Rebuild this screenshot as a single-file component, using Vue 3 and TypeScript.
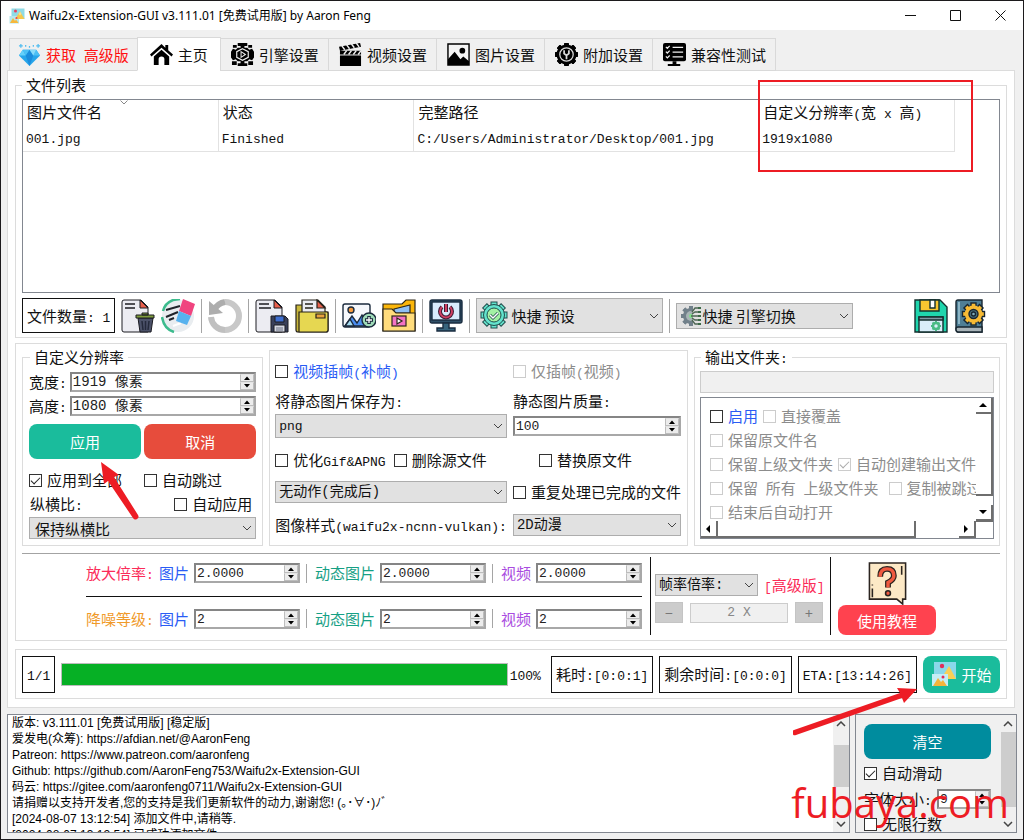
<script setup lang="ts">
import { h, type FunctionalComponent } from 'vue'

/* Text whose Latin runs are set in the narrower monospace face. */
const Mix: FunctionalComponent<{ s: string }> = (p) =>
  h(
    'span',
    { class: 'mix' },
    (p.s.match(/[\x20-\x7e]+|[^\x20-\x7e]+/g) ?? []).map((run) =>
      /^[\x20-\x7e]/.test(run) ? h('span', { class: 'lat' }, run) : run,
    ),
  )
Mix.props = ['s']

const Check: FunctionalComponent<{ s: string; on?: boolean; off?: boolean }> = (p) =>
  h('label', { class: ['check', { off: p.off }] }, [
    h('input', { type: 'checkbox', checked: !!p.on, disabled: !!p.off }),
    h(Mix, { s: p.s }),
  ])
Check.props = { s: String, on: Boolean, off: Boolean }

const Spin: FunctionalComponent<{ id: string; v: string; name?: string }> = (p) =>
  h('span', { class: 'spin' }, [
    h('input', { id: p.id, type: 'text', value: p.v, 'aria-label': p.name }),
    h('span', { class: 'steps' }, [
      h('button', { type: 'button', 'aria-label': '增加' }, [
        h('svg', { viewBox: '0 0 6 4' }, [h('path', { d: 'M0 4 3 0.5 6 4z' })]),
      ]),
      h('button', { type: 'button', 'aria-label': '减少' }, [
        h('svg', { viewBox: '0 0 6 4' }, [h('path', { d: 'M0 0 3 3.5 6 0z' })]),
      ]),
    ]),
  ])
Spin.props = ['id', 'v', 'name']

const Combo: FunctionalComponent<{ id: string; v: string; name: string }> = (p, { slots }) =>
  h('span', { class: 'combo' }, [
    slots.default?.(),
    h('select', { id: p.id, 'aria-label': p.name }, [h('option', p.v)]),
    h('svg', { class: 'chev', viewBox: '0 0 10 6' }, [h('path', { d: 'M1 1l4 4 4-4' })]),
  ])
Combo.props = ['id', 'v', 'name']

const scaleRows = [
  { id: 'scale', label: '放大倍率:', tone: 'red', v: '2.0000' },
  { id: 'noise', label: '降噪等级:', tone: 'orange', v: '2' },
]
const kinds = [
  { id: 'img', label: '图片', tone: 'blue' },
  { id: 'gif', label: '动态图片', tone: 'green' },
  { id: 'vid', label: '视频', tone: 'violet' },
]
const log = [
  '版本: v3.111.01 [免费试用版] [稳定版]',
  '爱发电(众筹): https://afdian.net/@AaronFeng',
  'Patreon: https://www.patreon.com/aaronfeng',
  'Github: https://github.com/AaronFeng753/Waifu2x-Extension-GUI',
  '码云: https://gitee.com/aaronfeng0711/Waifu2x-Extension-GUI',
  '请捐赠以支持开发者,您的支持是我们更新软件的动力,谢谢您! (｡･∀･)ﾉﾞ',
  '[2024-08-07 13:12:54] 添加文件中,请稍等.',
  '[2024-08-07 13:12:54] 已成功添加文件.',
]
const teeth8 = [0, 45, 90, 135, 180, 225, 270, 315]
</script>

<template>
  <div class="window">
    <header class="title">
      <svg class="app-icon" viewBox="0 0 32 32">
        <rect x="5" y="1" width="26" height="21" fill="#8fdbe6" />
        <rect x="1" y="16" width="19" height="15" fill="#b5e7ee" />
        <path d="M12 22 22 7l9 15z" fill="#f6c84c" /><path d="M19 12l3-5 3 5-3 3z" fill="#fbe08c" />
        <path d="M2 30l6-10 4 6 2-3 5 7z" fill="#f6b73c" />
        <circle cx="13" cy="6" r="3" fill="#e8415f" /><circle cx="15" cy="20" r="2" fill="#e8415f" />
      </svg>
      <h1>Waifu2x-Extension-GUI v3.111.01 [免费试用版] by Aaron Feng</h1>
      <div class="win-btns">
        <button type="button" aria-label="最小化"><svg viewBox="0 0 11 11"><path d="M0 5.500h11" /></svg></button>
        <button type="button" aria-label="最大化"><svg viewBox="0 0 11 11"><path d="M.5.5h10v10H.5z" /></svg></button>
        <button type="button" aria-label="关闭"><svg viewBox="0 0 11 11"><path d="M.5.5l10 10M10.500.5l-10 10" /></svg></button>
      </div>
    </header>

    <nav class="tabs">
      <button type="button" class="tab premium">
        <svg viewBox="0 0 24 24">
          <path d="M5 7h14l4 6-11 11L1 13z" fill="#27a5ea" /><path d="M5 7l3 6-7 0z" fill="#65d0fa" />
          <path d="M8 13l4-6 4 6-4 11z" fill="#1b8cdc" /><path d="M5 7h7l-4 6zM19 7l-3 6h7z" fill="#4cc0f5" />
          <path d="M12 7h7l-3 6z" fill="#88dcfb" />
          <path d="M3 1v4M1 3h4M21 1v4M19 3h4M8 2v2M12 3v2M16 2v2" stroke="#52bdf0" stroke-width="1.300" />
        </svg>
        <Mix s="获取 高级版" />
      </button>
      <button type="button" class="tab active">
        <svg viewBox="0 0 24 24"><path d="M12 1 0 12l1.500 2L12 5l10.500 9 1.500-2-5-4.500V2h-3v3z" /><path d="M4 14l8-7 8 7v9h-5v-6a3 3 0 0 0-6 0v6H4z" /></svg>
        <Mix s="主页" />
      </button>
      <button type="button" class="tab">
        <svg viewBox="0 0 24 24">
          <path d="M7 0h10v3h-3v2h3l2 2 3-1 2 3v6l-2 3-3-1-2 2h-3v2h3v3H7v-3h3v-2H7l-2-2-3 1-2-3V9l2-3 3 1 2-2h3V3H7z" />
          <path d="M1 19h5v4H1zM18 19h5v4h-5zM2 2h4v3H2zM18 2h4v3h-4z" />
          <path d="M12 6l6 3v6l-6 3-6-3V9z" fill="none" stroke="#f0f0f0" stroke-width="1.200" />
          <path d="M10 8v8l6-4z" fill="#f0f0f0" /><path d="M11 10l3 2-3 2z" />
        </svg>
        <Mix s="引擎设置" />
      </button>
      <button type="button" class="tab">
        <svg viewBox="0 0 24 24">
          <path d="M1 13h22v11H1z" /><path d="M1 8h22v4H1zM0 4 22 0l1 4L1 8z" />
          <path d="M5 12l3-4M10 12l3-4M15 12l3-4M20 12l3-4M6 7 3 3M11 6 8 2M16 5l-3-4M21 4l-3-4" stroke="#f0f0f0" stroke-width="1.500" />
        </svg>
        <Mix s="视频设置" />
      </button>
      <button type="button" class="tab">
        <svg viewBox="0 0 24 24">
          <path d="M1 1h22v22H1z" fill="#f4f4f4" stroke="#000" stroke-width="1.500" />
          <path d="M1 23V17l7-8 6 8 3-3 6 5v4z" /><circle cx="16" cy="8" r="3" />
        </svg>
        <Mix s="图片设置" />
      </button>
      <button type="button" class="tab">
        <svg viewBox="0 0 24 24">
          <rect v-for="a in teeth8" :key="a" x="9.500" y="0" width="5" height="24" rx="1" :transform="`rotate(${a} 12 12)`" />
          <circle cx="12" cy="12" r="10.500" />
          <circle cx="12" cy="12" r="7" fill="none" stroke="#dcdcdc" stroke-width="1.300" />
          <path d="M9.500 7.500v3.500l2.500 2 2.500-2V7.500M12 12v5" fill="none" stroke="#dcdcdc" stroke-width="1.800" />
        </svg>
        <Mix s="附加设置" />
      </button>
      <button type="button" class="tab">
        <svg viewBox="0 0 24 24">
          <rect width="24" height="19" y="0" rx="2" /><path d="M10 19h4v3h4v2H5v-2h5z" />
          <path d="M3 4l1.500 1.500L7 3M3 9l1.500 1.500L7 8M3 14l1.500 1.500L7 13M10 4.500h11M10 9.500h11M10 14.500h11" fill="none" stroke="#f0f0f0" stroke-width="1.300" />
        </svg>
        <Mix s="兼容性测试" />
      </button>
    </nav>

    <main class="pane">
      <fieldset class="group files">
        <legend><Mix s="文件列表" /></legend>
        <div class="list">
          <table>
            <colgroup><col class="c1" /><col class="c2" /><col class="c3" /><col class="c4" /></colgroup>
            <thead>
              <tr>
                <th>
                  <Mix s="图片文件名" />
                  <svg class="sort" viewBox="0 0 8 5"><path d="M.5.5 4 4 7.500.5" /></svg>
                </th>
                <th><Mix s="状态" /></th>
                <th><Mix s="完整路径" /></th>
                <th><Mix s="自定义分辨率(宽 x 高)" /></th>
              </tr>
            </thead>
            <tbody>
              <tr>
                <td><Mix s="001.jpg" /></td>
                <td><Mix s="Finished" /></td>
                <td><Mix s="C:/Users/Administrator/Desktop/001.jpg" /></td>
                <td><Mix s="1919x1080" /></td>
              </tr>
            </tbody>
          </table>
        </div>
        <div class="toolbar">
          <output class="framed"><Mix s="文件数量: 1" /></output>
          <button type="button" class="tool" aria-label="删除文件">
            <svg viewBox="0 0 34 34" stroke="#1c1c22" stroke-width="1">
              <path d="M1 3q0-2 2-2h17l7 7v25H3q-2 0-2-2z" fill="#ececf2" />
              <path d="M19 1l8 8h-8z" fill="#e8604c" /><path d="M4 5h10M4 9h10" stroke-width="1.500" />
              <path d="M17 19h15l-2 14H19z" fill="#4b5168" /><path d="M15 16h18v3H15zM21 14h6v2h-6z" fill="#7f9c3c" />
              <path d="M21 22l1 9M24.500 22v9M28 22l-1 9" stroke="#252a3c" stroke-width="1.500" />
            </svg>
          </button>
          <button type="button" class="tool" aria-label="清空列表">
            <svg viewBox="0 0 34 34">
              <circle cx="17" cy="17" r="16" fill="#e9edf0" />
              <path d="M2 12A16 16 0 0 1 12 1l7-1M1 18q2 12 12 15" fill="none" stroke="#3dbb8d" stroke-width="2.500" />
              <path d="M5 11l14-4M5 18l12-5M8 21l5-2" stroke="#20242b" stroke-width="2" />
              <path d="M12 27l8-3" stroke="#fff" stroke-width="2" />
              <path d="M22 0l12 5-4 12-12-5z" fill="#f0447f" /><path d="M18 12l12 5-4 9-11-4z" fill="#57b2ee" />
            </svg>
          </button>
          <i class="sep"></i>
          <button type="button" class="tool" aria-label="重置">
            <svg viewBox="0 0 34 34" fill="none">
              <path d="M17 3a14 14 0 0 1 0 28" stroke="#c8c8c8" stroke-width="6" />
              <path d="M17 31a14 14 0 0 1-14-13" stroke="#c0c0c0" stroke-width="6" />
              <path d="M6 11q4-7 11-8" stroke="#adadad" stroke-width="6" /><path d="M1 2v14l14-2z" fill="#adadad" />
            </svg>
          </button>
          <i class="sep"></i>
          <button type="button" class="tool" aria-label="保存列表">
            <svg viewBox="0 0 34 34" stroke="#1c1c22" stroke-width="1">
              <path d="M1 3q0-2 2-2h17l7 7v25H3q-2 0-2-2z" fill="#ececf2" />
              <path d="M19 1l8 8h-8z" fill="#e8604c" /><path d="M4 5h10M4 9h12" stroke-width="1.500" />
              <path d="M16 17h14l3 3v13H16z" fill="#39405a" /><path d="M20 17h9v6h-9z" fill="#3f6fd0" />
              <path d="M19 26h11v7H19z" fill="#d5d8e2" /><path d="M21 29h7M21 31h7" stroke="#6c7284" />
            </svg>
          </button>
          <button type="button" class="tool" aria-label="打开列表">
            <svg viewBox="0 0 34 34" stroke="#26221a" stroke-width="1.200">
              <path d="M1 6h7v7h25v18q0 2-2 2H3q-2 0-2-2z" fill="#c9b83c" />
              <path d="M7 1h16l7 7v6H7z" fill="#ececf2" /><path d="M22 1l8 8h-8z" fill="#e8604c" />
              <path d="M10 5h8M10 9h8" stroke-width="1.500" />
              <path d="M4 13h28q1 0 1 1v17q0 2-2 2H4z" fill="#e6d751" /><path d="M21 15h9v4h-9z" fill="#e8a23c" />
            </svg>
          </button>
          <i class="sep"></i>
          <button type="button" class="tool" aria-label="添加图片">
            <svg viewBox="0 0 34 34" stroke="#1b2a3c" stroke-width="1.400">
              <rect x="1" y="5" width="27" height="23" rx="2" fill="#f6f8fc" />
              <circle cx="9" cy="11" r="3" fill="#f59a3c" />
              <path d="M3 27l7-10 5 7 5-8 7 11z" fill="#4a8df0" /><path d="M3 27l5-7 4 7z" fill="#a5ddf2" />
              <circle cx="27" cy="21" r="7" fill="#9fdbb8" /><path d="M27 17v8M23 21h8" stroke-width="3.500" /><path d="M27 18v6M24 21h6" stroke="#fff" stroke-width="1.300" />
            </svg>
          </button>
          <button type="button" class="tool" aria-label="添加视频文件夹">
            <svg viewBox="0 0 34 34" stroke="#2c2618" stroke-width="1.200">
              <path d="M1 5h19l4-4h9v31H1z" fill="#fbb60a" /><path d="M12 10l16-4v8H12z" fill="#8fc0f4" />
              <path d="M1 10h9l4 4h19v18H1z" fill="#ffdc7c" /><rect x="10" y="17" width="14" height="10" fill="#f373c5" />
              <path d="M15 19v6l5-3z" fill="#fff" />
            </svg>
          </button>
          <i class="sep"></i>
          <button type="button" class="tool" aria-label="完成后关机">
            <svg viewBox="0 0 34 34" stroke="#1a2d40" stroke-width="1.400">
              <rect x="1" y="1" width="32" height="23" rx="2" fill="#2f5068" /><rect x="3" y="3" width="28" height="18" fill="#d8ebfd" />
              <path d="M14 24h6v5h6v3H8v-3h6z" fill="#37647d" />
              <path d="M13 8a6 6 0 1 0 8 0M17 5v8" fill="none" stroke="#3d1c34" stroke-width="4" />
              <path d="M13 8a6 6 0 1 0 8 0M17 5v8" fill="none" stroke="#cf3f63" stroke-width="2" />
            </svg>
          </button>
          <i class="sep"></i>
          <Combo id="preset" class="preset" v="快捷 预设" name="快捷 预设">
            <svg class="pic big" viewBox="0 0 28 28">
              <g stroke="#1f4c4c" stroke-width="1">
                <rect v-for="a in teeth8" :key="a" x="11" y="1" width="6" height="7" fill="#63e3cd" :transform="`rotate(${a} 14 14)`" />
                <circle cx="14" cy="14" r="10.500" fill="#63e3cd" /><circle cx="14" cy="14" r="7" fill="#a2f2a4" />
                <path d="M10 14l3 3 5-5" fill="none" stroke-width="3" />
              </g>
              <path d="M10 14l3 3 5-5" fill="none" stroke="#fff" stroke-width="1.500" />
            </svg>
          </Combo>
          <i class="sep"></i>
          <Combo id="engine" class="engine" v="快捷 引擎切换" name="快捷 引擎切换">
            <svg class="pic" viewBox="0 0 20 20">
              <rect v-for="a in teeth8" :key="a" x="8" y="0" width="4" height="20" fill="#71808a" :transform="`rotate(${a} 10 10)`" />
              <circle cx="10" cy="10" r="8" fill="#71808a" /><circle cx="10" cy="10" r="5" fill="#a8b4b6" />
              <path d="M12 0h8v20h-8z" fill="#e1e1e1" /><circle cx="10" cy="10" r="2" fill="#7fe08a" />
              <path d="M10 10h9M11 6l3-4h5M11 8l3-2h5M11 12l3 2h5M11 14l3 4h5" fill="none" stroke="#4e6654" stroke-width="1.300" />
              <path d="M17 1h3v2h-3zM17 5h3v2h-3zM17 9h3v2h-3zM17 13h3v2h-3zM17 17h3v2h-3z" fill="#3d6a48" />
            </svg>
          </Combo>
          <div class="tool-end">
            <button type="button" class="tool" aria-label="保存设置">
              <svg viewBox="0 0 34 34" stroke="#15302f" stroke-width="1.400">
                <path d="M1 1h25l7 7v25H1z" fill="#1fd5ad" /><path d="M6 1h19v11H6z" fill="#f7c530" /><path d="M16 1h5v8h-5z" fill="#fff" />
                <path d="M5 18h24v15H5z" fill="#d9eefa" /><path d="M5 18h24v3H5z" fill="#8095a5" />
                <circle cx="22" cy="27" r="3" fill="none" stroke="#49bb84" stroke-width="2.500" />
                <path d="M22 22v2M22 30v2M17 27h2M25 27h2M18.500 23.500l1.500 1.500M24 29l1.500 1.500M25.500 23.500 24 25M20 29l-1.500 1.500" stroke="#49bb84" stroke-width="2" />
              </svg>
            </button>
            <button type="button" class="tool" aria-label="设置手册">
              <svg viewBox="0 0 34 34" stroke="#172630" stroke-width="1.400">
                <path d="M2 3q0-2 2-2h24v32H4q-2 0-2-3z" fill="#4f7f96" /><path d="M2 30q0-2 2-2h24v5H4q-2 0-2-3z" fill="#a9b4b9" />
                <path d="M5 3v22" stroke="#a8cddb" />
                <rect v-for="a in teeth8" :key="a" x="17" y="4" width="5" height="6" fill="#f7bb35" :transform="`rotate(${a} 19.500 15)`" />
                <circle cx="19.500" cy="15" r="8" fill="#f7bb35" stroke="#f7bb35" /><circle cx="19.500" cy="15" r="4.500" fill="#46707f" /><circle cx="19.500" cy="15" r="2" fill="#7faebb" />
              </svg>
            </button>
          </div>
        </div>
      </fieldset>

      <section class="group settings">
        <div class="cols">
          <fieldset class="group custom">
            <legend><Mix s="自定义分辨率" /></legend>
            <div class="line dim"><label for="cw"><Mix s="宽度:" /></label><Spin id="cw" class="wide" v="1919 像素" /></div>
            <div class="line dim"><label for="ch"><Mix s="高度:" /></label><Spin id="ch" class="wide" v="1080 像素" /></div>
            <div class="line pair">
              <button type="button" class="btn teal">应用</button><button type="button" class="btn red-bg">取消</button>
            </div>
            <div class="line opts"><Check s="应用到全部" on /><Check s="自动跳过" /></div>
            <div class="line ratio"><label for="aspect"><Mix s="纵横比:" /></label><Check s="自动应用" /></div>
            <Combo id="aspect" v="保持纵横比" name="纵横比" />
          </fieldset>

          <div class="group save">
            <Check class="blue" s="视频插帧(补帧)" /><Check s="仅插帧(视频)" off />
            <label class="cap" for="fmt"><Mix s="将静态图片保存为:" /></label><label class="cap" for="quality"><Mix s="静态图片质量:" /></label>
            <Combo id="fmt" class="tall" v="png" name="将静态图片保存为" /><Spin id="quality" v="100" />
            <div class="duo"><Check s="优化Gif&APNG" /><Check s="删除源文件" /></div><Check class="indent" s="替换原文件" />
            <Combo id="after" class="latin" v="无动作(完成后)" name="完成后" /><Check s="重复处理已完成的文件" />
            <label for="style"><Mix s="图像样式(waifu2x-ncnn-vulkan):" /></label><Combo id="style" class="latin" v="2D动漫" name="图像样式" />
          </div>

          <fieldset class="group outdir">
            <legend><label for="out"><Mix s="输出文件夹:" /></label></legend>
            <input id="out" class="path" type="text" disabled />
            <div class="scroll">
              <div class="view">
                <div><Check class="blue" s="启用" /><Check s="直接覆盖" off /></div>
                <div><Check s="保留原文件名" off /></div>
                <div><Check s="保留上级文件夹" off /><Check s="自动创建输出文件夹" on off /></div>
                <div class="far"><Check s="保留 所有 上级文件夹" off /><Check s="复制被跳过的文件" off /></div>
                <div><Check s="结束后自动打开" off /></div>
              </div>
              <div class="vbar">
                <span class="key"><svg viewBox="0 0 8 4"><path d="M0 4l4-4 4 4z" /></svg></span>
                <span class="thumb"></span>
                <span class="key"><svg viewBox="0 0 8 4"><path d="M0 0l4 4 4-4z" /></svg></span>
              </div>
              <div class="hbar">
                <span class="key"><svg class="side-arrow" viewBox="0 0 4 8"><path d="M4 0v8L0 4z" /></svg></span>
                <span class="thumb"></span>
                <span class="key"><svg class="side-arrow" viewBox="0 0 4 8"><path d="M0 0v8l4-4z" /></svg></span>
              </div>
              <div class="corner"></div>
            </div>
          </fieldset>
        </div>

        <hr />

        <div class="levels">
          <div class="scales">
            <div v-for="r in scaleRows" :key="r.id" class="scale-row">
              <span class="scale-name" :class="r.tone"><Mix :s="r.label" /></span>
              <template v-for="(k, i) in kinds" :key="k.id">
                <i v-if="i" class="sep"></i>
                <label :for="r.id + k.id" :class="k.tone">{{ k.label }}</label>
                <Spin :id="r.id + k.id" :v="r.v" />
              </template>
            </div>
          </div>
          <div class="fps">
            <div class="line"><Combo id="fps" class="latin" v="帧率倍率:" name="帧率倍率" /><a href="#" class="red"><Mix s="[高级版]" /></a></div>
            <div class="line stepper">
              <button type="button" disabled>−</button><input type="text" value="2 X" aria-label="倍率" disabled /><button type="button" disabled>+</button>
            </div>
          </div>
          <div class="help">
            <svg viewBox="0 0 40 44" stroke="#2b2420" stroke-width="1.600">
              <path d="M1 1h37v37h-3v5l-6-5H1z" fill="#fde9c6" />
              <path d="M4 23v1M4 27v9M34 4v9" />
              <path d="M12 15q0-8 7-8t7 7q0 4-6 7v5" fill="none" stroke-width="6" />
              <path d="M12 15q0-8 7-8t7 7q0 4-6 7v5" fill="none" stroke="#f0593f" stroke-width="3.500" />
              <circle cx="20" cy="32" r="2.500" fill="#f0593f" />
            </svg>
            <button type="button" class="btn pink">使用教程</button>
          </div>
        </div>
      </section>

      <section class="group run">
        <output class="framed"><Mix s="1/1" /></output>
        <div class="bar" role="progressbar" aria-valuenow="100" aria-label="进度"></div>
        <span class="pct"><Mix s="100%" /></span>
        <output class="framed"><Mix s="耗时:[0:0:1]" /></output>
        <output class="framed"><Mix s="剩余时间:[0:0:0]" /></output>
        <output class="framed"><Mix s="ETA:[13:14:26]" /></output>
        <button type="button" class="btn teal start">
          <svg viewBox="0 0 26 26">
            <rect x="3" y="1" width="22" height="17" fill="#8ad8ea" /><path d="M10 18l8-13 7 13z" fill="#f9cf55" />
            <rect x="1" y="13" width="16" height="12" fill="#c4edf5" /><path d="M2 25l5-8 3 4 2-2 4 6z" fill="#f5b53a" />
            <circle cx="11" cy="5" r="2.200" fill="#e02e5b" /><circle cx="12" cy="16" r="1.500" fill="#e02e5b" />
          </svg>
          开始
        </button>
      </section>
    </main>

    <footer class="bottom">
      <div class="log">
        <div class="log-text"><p v-for="(l, i) in log" :key="i">{{ l }}</p></div>
        <div class="track low">
          <svg viewBox="0 0 10 6"><path d="M1 5l4-4 4 4" /></svg><span class="grip"></span><svg viewBox="0 0 10 6"><path d="M1 1l4 4 4-4" /></svg>
        </div>
      </div>
      <div class="side">
        <div class="side-body">
          <button type="button" class="btn sea">清空</button>
          <Check s="自动滑动" on />
          <div class="line size"><label for="fs"><Mix s="字体大小:" /></label><Spin id="fs" v="9" /></div>
          <Check s="无限行数" />
        </div>
        <div class="track high">
          <svg viewBox="0 0 10 6"><path d="M1 5l4-4 4 4" /></svg><span class="grip"></span><svg viewBox="0 0 10 6"><path d="M1 1l4 4 4-4" /></svg>
        </div>
      </div>
    </footer>

    <div class="mark-box"></div>
    <svg class="mark-apply" viewBox="0 0 38 58"><path d="M0 0l18 13-5 2L37 53a2.500 2.500 0 0 1-5 3L7 19l-4 3z" /></svg>
    <svg class="mark-start" viewBox="0 0 124 48"><path d="M124 1l-13 14-2-5L3 47a2.500 2.500 0 0 1-2-5L107 5l-3-5z" /></svg>
    <div class="watermark">fubaya.com</div>
  </div>
</template>

<style>
body { margin: 0; }
.window, .window button, .window input, .window select {
  font-family: "Noto Sans CJK SC", sans-serif;
  font-size: 15px;
}
.mix { white-space: pre; }
.lat { font-family: "Liberation Mono", monospace; font-size: 13px; line-height: 1; }
.check { display: flex; align-items: center; gap: 5px; white-space: nowrap; }
.check.off { color: #8c8c8c; }
.check input {
  appearance: none; flex: none; width: 13px; height: 13px; margin: 0;
  border: 1px solid #333; background: #fff; display: grid; place-items: center;
}
.check.off input { border-color: #ccc; }
.check input:checked::after {
  content: ""; width: 8px; height: 4px; margin-bottom: 2px;
  border-left: 1px solid #222; border-bottom: 1px solid #222; transform: rotate(-45deg);
}
.check.off input:checked::after { border-color: #aaa; }
.spin {
  display: flex; box-sizing: border-box; height: 20px; min-width: 0;
  border: 2px solid #858585; border-right-color: #a8a8a8; border-bottom-color: #a8a8a8; background: #fff;
}
.window .spin input {
  flex: 1; min-width: 0; width: 0; border: 0; padding: 1px 1px 0; outline: 0; background: none;
  font: 13px/15px "Liberation Mono", "Noto Sans CJK SC", monospace; color: #222;
}
.window .spin.wide input { font-size: 14px; }
.steps { display: flex; flex-direction: column; width: 14px; }
.steps button {
  flex: 1; min-height: 0; padding: 0; display: grid; place-items: center;
  background: #ececec; border: 1px solid #bdbdbd; border-top-color: #e4e4e4;
}
.steps svg { width: 6px; height: 4px; display: block; }
.combo { position: relative; display: flex; min-width: 0; height: 22px; }
.combo select {
  appearance: none; width: 100%; margin: 0; padding: 0 20px 0 5px;
  border: 1px solid #adadad; border-radius: 0; background: #e1e1e1; color: #111;
}
.window .combo.latin select, .window .combo.tall select {
  font: 14px "Liberation Mono", "Noto Sans CJK SC", monospace; padding-left: 3px;
}
.window .combo.tall select { font-size: 13px; }
.chev { position: absolute; right: 4px; top: 50%; width: 10px; height: 6px; margin-top: -3px; fill: none; stroke: #444; pointer-events: none; }
.pic { position: absolute; left: 5px; top: 3px; width: 20px; height: 20px; }
.pic.big { left: 4px; top: 3px; width: 28px; height: 28px; }
</style>

<style scoped>
.window {
  position: relative; box-sizing: border-box; height: 100vh; display: flex; flex-direction: column;
  border: 1px solid #1c1a1c; background: #f0f0f0; color: #111; line-height: 20px; overflow: hidden;
}
h1, p { margin: 0; font-weight: normal; }
button { cursor: default; }
.title { display: flex; align-items: center; height: 29px; flex: none; background: #fff; padding-left: 8px; }
.title h1 { flex: 1; margin-left: 4px; font: 12px/20px "Noto Sans", "Noto Sans CJK SC", sans-serif; color: #000; }
.app-icon { width: 16px; height: 16px; }
.win-btns { display: flex; }
.win-btns button { width: 45px; height: 29px; padding: 0; border: 0; background: none; display: grid; place-items: center; }
.win-btns svg { width: 11px; height: 11px; fill: none; stroke: #111; }

.tabs { display: flex; align-items: flex-end; flex: none; margin: 7px 8px -1px; position: relative; z-index: 1; }
.tab {
  display: flex; align-items: center; gap: 5px; height: 33px; padding: 0 9px 0 10px; margin-left: -1px;
  border: 1px solid #d9d9d9; background: #f0f0f0; color: #111; white-space: nowrap;
}
.tab:first-child { margin-left: 0; padding: 0 8px; }
.tab.premium { color: #f11; }
.tab.active { height: 34px; background: #fff; border-bottom-color: #fff; padding: 0 12px; }
.tab svg { width: 23px; height: 23px; }

.pane { flex: none; margin: 0 8px 0 6px; padding: 4px 7px 8px; border: 1px solid #dcdcdc; background: #fff; }
.group { border: 1px solid #dcdcdc; margin: 0; min-width: 0; box-sizing: border-box; }
legend { padding: 0 4px; height: 20px; line-height: 20px; }
.files { padding: 4px 6px 4px; }
.list { height: 192px; border: 1px solid #828790; }
table { border-collapse: separate; border-spacing: 0; table-layout: fixed; width: 932px; max-width: 100%; }
.c1, .c2 { width: 21%; } .c3 { width: 37%; } .c4 { width: 21%; }
th, td { box-sizing: border-box; padding: 0 0 0 4px; border-right: 1px solid #e2e2e2; text-align: left; font-weight: normal; white-space: nowrap; }
th { height: 23px; position: relative; }
td { height: 29px; padding-left: 3px; border-bottom: 1px solid #e2e2e2; }
.sort { position: absolute; left: 50%; top: 0; width: 8px; height: 5px; fill: none; stroke: #888; }
.toolbar { display: flex; align-items: center; gap: 6px; margin-top: 5px; height: 35px; }
.framed { display: flex; align-items: center; justify-content: center; box-sizing: border-box; height: 35px; padding: 0 4px; border: 1px solid #111; white-space: nowrap; }
.tool { width: 34px; height: 34px; padding: 0; border: 0; background: none; flex: none; }
.tool svg { display: block; width: 34px; height: 34px; }
.sep { flex: none; width: 1px; height: 34px; background: #a5a5a5; }
.preset { width: 187px; height: 35px; }
.preset :deep(select) { padding-left: 34px; }
.engine { width: 177px; height: 26px; }
.engine :deep(select) { padding-left: 25px; }
.tool-end { display: flex; gap: 6px; margin: 0 12px 0 auto; }

.settings { margin-top: 5px; padding: 3px 6px 5px; }
.cols { display: grid; grid-template-columns: 242fr 420fr 307fr; gap: 6px; align-items: end; }
.line { display: flex; align-items: center; }
.custom { padding: 3px 6px 6px; height: 199px; }
.custom legend, .outdir legend { margin-left: 1px; }
.dim { gap: 3px; height: 24px; }
.dim :deep(.spin) { flex: 1; }
.btn { border: 0; border-radius: 8px; color: #fff; padding: 0; height: 35px; }
.teal { background: #1abc9c; } .red-bg { background: #e74c3c; } .pink { background: #ff424f; } .sea { background: #008c9e; }
.pair { gap: 3px; margin-top: 6px; }
.pair .btn { flex: 1; }
.opts { gap: 22px; margin-top: 11px; }
.ratio { justify-content: space-between; padding: 0 4px 0 1px; margin-top: 4px; }
.custom > .combo { margin-top: 3px; }

.save {
  height: 196px; padding: 10px 6px 0 5px; display: grid; column-gap: 6px; align-items: center;
  grid-template-columns: 232fr 170fr; grid-template-rows: 20px 30px 30px 38px 26px 40px; white-space: nowrap;
}
.cap { align-self: end; }
.blue { color: #2a5cf5; }
.tall { height: 24px; }
.duo { display: flex; gap: 8px; }
.indent { margin-left: 26px; }

.outdir { padding: 4px 5px 5px; height: 199px; }
.path { display: block; box-sizing: border-box; width: 100%; height: 22px; border: 1px solid #ccc; background: #f0f0f0; }
.scroll {
  margin-top: 4px; height: 142px; border: 1px solid #828790; box-sizing: border-box;
  display: grid; grid-template: minmax(0, 1fr) 17px / minmax(0, 1fr) 17px;
}
.view { overflow: hidden; padding: 6px 0 0 9px; }
.view > div { display: flex; gap: 5px; height: 24px; align-items: center; }
.view > .far { gap: 10px; }
.vbar { display: flex; flex-direction: column; }
.hbar { display: flex; }
.key { display: grid; place-items: center; width: 17px; height: 16px; box-sizing: border-box; border-right: 2px solid #6e6e6e; border-bottom: 2px solid #6e6e6e; background: #fff; flex: none; }
.hbar .key { height: 17px; }
.key svg { width: 8px; height: 4px; }
.key .side-arrow { width: 4px; height: 8px; }
.thumb { box-sizing: border-box; border-right: 2px solid #6e6e6e; border-bottom: 2px solid #6e6e6e; }
.vbar .thumb { height: 82px; width: 17px; margin-bottom: auto; }
.hbar .thumb { width: 198px; height: 17px; margin-right: auto; }
.corner { border-top: 1px solid #6e6e6e; }

hr { margin: 7px 0 3px; border: 0; border-top: 1px solid #a3a3a3; }
.levels { display: flex; height: 78px; }
.scales { flex: 1; margin-left: 64px; padding-right: 8px; border-right: 1px solid #111; display: flex; flex-direction: column; }
.scale-row { flex: 1; display: flex; align-items: center; padding: 0 0 6px; white-space: nowrap; }
.scale-row + .scale-row { border-top: 1px solid #111; padding: 6px 0 0; }
.scale-row .sep { height: 19px; margin: 0 8px 0 6px; }
.scale-row label { margin-right: 5px; }
.scale-row :deep(.spin) { flex: 1; }
.scale-name { width: 73px; }
.red { color: #fb2c58; text-decoration: none; } .orange { color: #f09a2a; } .green { color: #16a085; } .violet { color: #a94be0; }
.fps { width: 180px; box-sizing: border-box; padding: 17px 7px 0 4px; border-right: 1px solid #111; }
.fps .combo { width: 103px; flex: none; margin-right: 6px; }
.stepper { justify-content: space-between; margin-top: 6px; }
.stepper button { width: 28px; height: 21px; padding: 0; border: 1px solid #c4c4c4; background: #ccc; color: #777; font-size: 14px; line-height: 14px; }
.stepper input { width: 98px; height: 20px; box-sizing: border-box; border: 1px solid #ccc; background: #f0f0f0; color: #888; text-align: center; padding: 0; font: 13px "Liberation Mono", monospace; }
.help { width: 169px; display: flex; flex-direction: column; padding: 5px 0 0 7px; box-sizing: border-box; }
.help svg { width: 40px; height: 44px; margin-left: 30px; }
.help .btn { width: 98px; height: 30px; flex: none; }

.run { display: flex; align-items: center; gap: 6px; margin-top: 8px; padding: 6px; height: 50px; }
.run .framed { height: 37px; }
.bar { flex: 1; height: 23px; box-sizing: border-box; background: #06b025; border: 1px solid #bcbcbc; }
.pct { margin: 0 4px 0 -4px; }
.start { width: 77px; height: 37px; display: flex; align-items: center; justify-content: center; gap: 4px; }
.start svg { width: 26px; height: 26px; }

.bottom { flex: 1 1 0; min-height: 90px; display: flex; gap: 5px; margin: 6px 6px 6px; }
.log, .side { display: flex; border: 1px solid #828790; overflow: hidden; }
.log { flex: 1; background: #fff; }
.log-text { flex: 1; min-width: 0; overflow: hidden; padding-left: 4px; }
.log-text p { font: 12px/16px "Liberation Sans", "Noto Sans CJK SC", sans-serif; white-space: nowrap; color: #000; }
.side { width: 160px; flex: none; }
.side-body { flex: 1; padding: 9px 9px 0 8px; min-width: 0; }
.side-body .btn { width: 100%; height: 35px; margin-bottom: 4px; display: block; }
.size { justify-content: space-between; height: 31px; }
.size :deep(.spin) { width: 54px; }
.track { width: 16px; display: flex; flex-direction: column; align-items: center; background: #f0f0f0; flex: none; padding: 6px 0 5px; }
.track svg { width: 10px; height: 6px; fill: none; stroke: #444; stroke-width: 1.500; flex: none; }
.grip { width: 15px; background: #cdcdcd; }
.low .grip { height: 42px; margin: 18px 0 auto; }
.high .grip { height: 75px; margin: 5px 0 auto; }

.mark-box, .mark-apply, .mark-start, .watermark { position: absolute; pointer-events: none; z-index: 3; }
.mark-box { left: 757px; top: 79px; width: 211px; height: 88px; border: 2px solid #ed1c24; }
.mark-apply { left: 100px; top: 461px; width: 38px; height: 58px; fill: #ed1c24; }
.mark-start { left: 792px; top: 687px; width: 124px; height: 48px; fill: #ed1c24; }
.watermark { right: 14px; bottom: 9px; font: 40px/54px "Open Sans", sans-serif; color: #ed1c24; }
</style>
